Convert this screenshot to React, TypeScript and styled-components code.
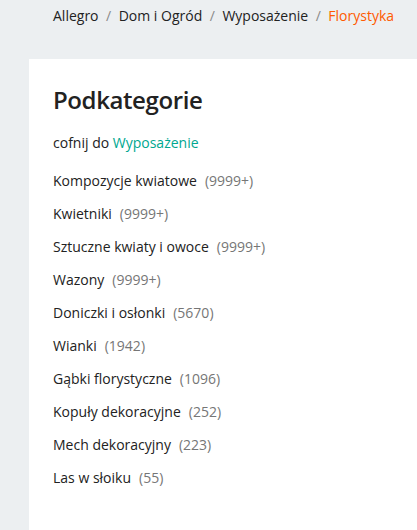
import React from 'react';
import styled, { createGlobalStyle } from 'styled-components';

const GlobalStyle = createGlobalStyle`
  html, body {
    margin : 0;
    padding : 0;
    background : #eceff1;
  }
  body {
    font-family : "Open Sans", "Liberation Sans", sans-serif;
    color : #222;
    overflow : hidden;
  }
`

const Page = styled.div`
  width : 417px;
  height : 530px;
  display : flex;
  flex-direction : column;
`

const Breadcrumbs = styled.nav`
  display : flex;
  align-items : center;
  height : 30px;
  padding : 0 0 0 53px;
  font-size : 14px;
  white-space : nowrap;
`

const Crumb = styled.a`
  color : ${(props : {active? : boolean}) => props.active ? '#ff5a00' : '#222'};
  text-decoration : none;
`

const Sep = styled.span`
  color : #8a8a8a;
  margin : 0 7.5px;
`

const Panel = styled.section`
  flex-grow : 1;
  margin : 29px 0 0 29px;
  background : #fff;
  padding : 25px 0 0 24px;
`

const Title = styled.h2`
  margin : 0;
  font-size : 24px;
  font-weight : 600;
  letter-spacing : -0.4px;
  line-height : 32px;
  color : #222;
`

const Back = styled.div`
  margin-top : 17px;
  font-size : 14px;
  line-height : 20px;
`

const BackLink = styled.a`
  color : #00a790;
  text-decoration : none;
`

const List = styled.ul`
  list-style : none;
  margin : 18px 0 0;
  padding : 0;
  display : flex;
  flex-direction : column;
  gap : 13px;
`

const Item = styled.li`
  font-size : 14px;
  line-height : 20px;
  white-space : nowrap;
`

const Count = styled.span`
  color : #767676;
  margin-left : 8px;
`

const crumbs = ['Allegro', 'Dom i Ogród', 'Wyposażenie', 'Florystyka'];

const categories : [string, string][] = [
  ['Kompozycje kwiatowe', '9999+'],
  ['Kwietniki', '9999+'],
  ['Sztuczne kwiaty i owoce', '9999+'],
  ['Wazony', '9999+'],
  ['Doniczki i osłonki', '5670'],
  ['Wianki', '1942'],
  ['Gąbki florystyczne', '1096'],
  ['Kopuły dekoracyjne', '252'],
  ['Mech dekoracyjny', '223'],
  ['Las w słoiku', '55'],
];

const App = () => {
  return (
    <>
      <GlobalStyle />
      <Page>
        <Breadcrumbs>
          {crumbs.map((c, index) => (
            <React.Fragment key={c}>
              {index > 0 && <Sep>/</Sep>}
              <Crumb active={index === crumbs.length - 1}>{c}</Crumb>
            </React.Fragment>
          ))}
        </Breadcrumbs>
        <Panel>
          <Title>Podkategorie</Title>
          <Back>cofnij do <BackLink>Wyposażenie</BackLink></Back>
          <List>
            {categories.map(([name, count]) => (
              <Item key={name}>
                {name}<Count>({count})</Count>
              </Item>
            ))}
          </List>
        </Panel>
      </Page>
    </>
  )
}

export default App;
